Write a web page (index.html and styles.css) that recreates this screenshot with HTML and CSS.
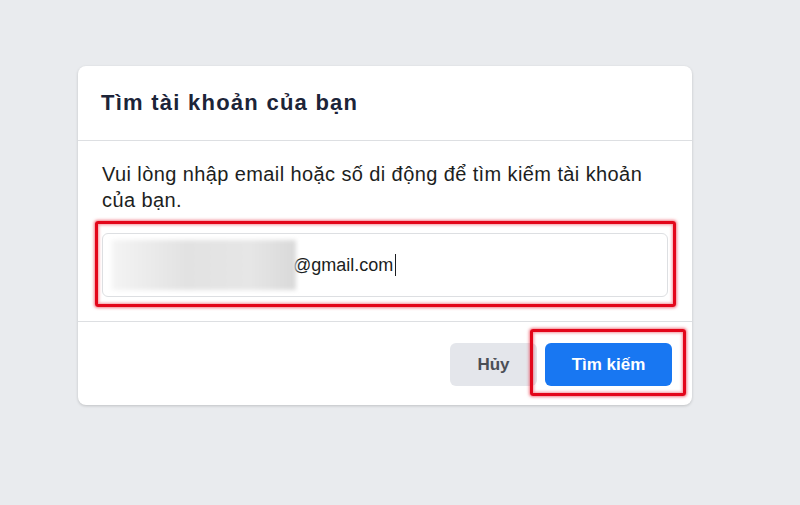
FILE: index.html
```html
<!DOCTYPE html>
<html lang="vi">
<head>
    <meta charset="UTF-8">
    <meta name="viewport" content="width=device-width, initial-scale=1.0">
    <title>Tìm tài khoản của bạn</title>
    <link rel="stylesheet" href="styles.css">
</head>
<body>
    <div class="card">
        <div class="card-header">
            <h2>Tìm tài khoản của bạn</h2>
        </div>
        <div class="card-body">
            <p>Vui lòng nhập email hoặc số di động để tìm kiếm tài khoản của bạn.</p>
            <div class="field marked">
                <span class="blurred"></span>
                <span class="value">@gmail.com</span>
                <span class="caret"></span>
            </div>
        </div>
        <div class="card-footer">
            <button class="btn btn-cancel">Hủy</button>
            <button class="btn btn-search marked">Tìm kiếm</button>
        </div>
    </div>
</body>
</html>
```

FILE: styles.css
```css
body {
    margin: 0;
    background: #e9ebee;
    font-family: "Liberation Sans", Arial, sans-serif;
    color: #1c1e21;
    height: 505px;
    overflow: hidden;
}
.card {
    width: 614px;
    margin: 66px 0 0 78px;
    background: #fff;
    border-radius: 8px;
    box-shadow: 0 1px 3px rgba(0,0,0,0.18);
}
.card-header {
    height: 74px;
    padding: 0 23px;
    display: flex;
    align-items: center;
    border-bottom: 1px solid #dddfe2;
}
.card-header h2 {
    margin: 0;
    font-size: 22px;
    letter-spacing: 1.25px;
    font-weight: bold;
    color: #1c2438;
}
.card-body {
    padding: 20px 24px 24px 24px;
    border-bottom: 1px solid #dddfe2;
}
.card-body p {
    margin: 0 0 20px 0;
    font-size: 20px;
    letter-spacing: 0.4px;
    line-height: 26px;
    color: #1c1e21;
}
.field {
    height: 62px;
    border: 1px solid #dddfe2;
    border-radius: 6px;
    display: flex;
    align-items: center;
    padding: 0 9px 0 9px;
    font-size: 18px;
    color: #1c1e21;
}
.blurred {
    width: 184px;
    height: 50px;
    margin-right: -3px;
    background: linear-gradient(90deg, #f4f4f4, #e2e2e2 40%, #e6e6e6 75%, #d9d9d9);
    filter: blur(2px);
}
.caret {
    width: 1px;
    height: 22px;
    margin-left: 2px;
    background: #1c1e21;
}
.card-footer {
    display: flex;
    justify-content: flex-end;
    gap: 8px;
    padding: 21px 20px 19px;
}
.btn {
    height: 43px;
    border: none;
    border-radius: 6px;
    font-family: "Liberation Sans", Arial, sans-serif;
    font-size: 17px;
    font-weight: bold;
    cursor: pointer;
}
.btn-cancel {
    width: 87px;
    background: #e4e6eb;
    color: #4b4f56;
}
.btn-search {
    width: 127px;
    background: #1877f2;
    color: #fff;
}

/* red annotation boxes */
.marked {
    position: relative;
}
.marked::after {
    content: "";
    position: absolute;
    border: 3px solid #e3061a;
    border-radius: 3px;
    box-shadow: 0 0 3px 1px rgba(230,20,40,0.55), inset 0 0 3px 1px rgba(230,20,40,0.45);
    pointer-events: none;
}
.field.marked::after {
    top: -13px;
    bottom: -11px;
    left: -8px;
    right: -9px;
}
.btn-search.marked::after {
    top: -14px;
    bottom: -10px;
    left: -15px;
    right: -14px;
}
```
